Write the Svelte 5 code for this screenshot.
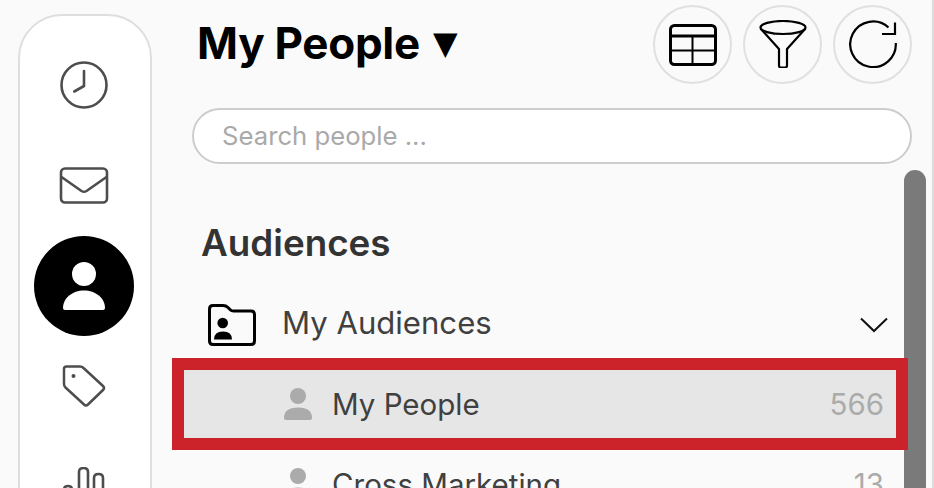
<script>
	const audiences = [
		{ name: 'My People', count: 566, selected: true },
		{ name: 'Cross Marketing', count: 13, selected: false }
	];
</script>

<div class="page">
	<nav class="rail">
		<button class="rail-btn" aria-label="Recent">
			<svg width="50" height="50" viewBox="0 0 50 50" fill="none" stroke="#4d4d4d" stroke-width="2.6" stroke-linecap="round" stroke-linejoin="round">
				<circle cx="25" cy="25" r="22.5" />
				<path d="M25 11v15l-9.700 5.500" />
			</svg>
		</button>
		<button class="rail-btn" aria-label="Messages">
			<svg width="50" height="38" viewBox="0 0 50 38" fill="none" stroke="#4d4d4d" stroke-width="2.6" stroke-linecap="round" stroke-linejoin="round">
				<rect x="2" y="1.500" width="46" height="34" rx="4" />
				<path d="M2.500 10l20 14q2.500 1.500 5 0l20-14" />
			</svg>
		</button>
		<button class="rail-btn active" aria-label="People">
			<svg width="44" height="50" viewBox="0 0 44 50" fill="#fff">
				<circle cx="22" cy="13" r="12" />
				<path d="M1 47c0-10 9.500-17.500 21-17.500S43 37 43 47q0 2-2 2H3q-2 0-2-2z" />
			</svg>
		</button>
		<button class="rail-btn" aria-label="Tags">
			<svg width="44" height="44" viewBox="0 0 44 44" fill="none" stroke="#4d4d4d" stroke-width="2.500" stroke-linejoin="round">
				<path d="M2 4q0-2.500 2.500-2.500H18q2 0 3.500 1.500l19.500 18q2 2 0 4L26 39.500q-2 2-4 0L3.500 22.500Q2 21 2 19z" />
				<circle cx="11.500" cy="11" r="2" fill="#4d4d4d" stroke="none" />
			</svg>
		</button>
		<button class="rail-btn" aria-label="Reports">
			<svg width="44" height="50" viewBox="0 0 44 50" fill="none" stroke="#4d4d4d" stroke-width="2.600">
				<path d="M2 50V23q0-4 4-4t4 4v27" />
				<path d="M17 50V5q0-4 4.500-4T26 5v45" />
				<path d="M32 50V11q0-4 4.500-4T41 11v39" />
			</svg>
		</button>
	</nav>

	<main class="panel">
		<header class="top">
			<h1>My People <span class="caret">▼</span></h1>
			<div class="tools">
				<button class="tool" aria-label="Columns">
					<svg width="48" height="42" viewBox="0 0 48 42" fill="none" stroke="#000">
						<rect x="1.500" y="1.500" width="45" height="39" rx="4" stroke-width="3" />
						<path d="M2 12h44" stroke-width="3" />
						<path d="M2 26.500h44M23.500 12v28" stroke-width="2" />
					</svg>
				</button>
				<button class="tool funnel" aria-label="Filter">
					<svg width="48" height="48" viewBox="0 0 48 48" fill="none" stroke="#000" stroke-width="2.200" stroke-linejoin="round">
						<ellipse cx="24" cy="7.500" rx="22.500" ry="6.500" />
						<path d="M1.500 8.500L20 29v16.500q0 2 2 2h4q2 0 2-2V29L46.500 8.500" />
					</svg>
				</button>
				<button class="tool funnel" aria-label="Refresh">
					<svg width="48" height="48" viewBox="0 0 48 48" fill="none" stroke="#000" stroke-width="2.200">
						<path d="M46.800 23A22.800 22.800 0 1 1 39.500 7.500" />
						<path d="M46 2.500V14H33" />
					</svg>
				</button>
			</div>
		</header>

		<input class="search" type="text" placeholder="Search people ..." />

		<div class="list">
			<h2>Audiences</h2>
			<div class="group">
				<svg class="folder" width="48" height="42" viewBox="0 0 48 42">
					<path d="M5 1.500h10q3 0 5 2l2.500 2.500q1 1 3 1H43q3.500 0 3.500 3.500V37q0 3.500-3.500 3.500H5Q1.500 40.500 1.500 37V5Q1.500 1.500 5 1.500z" fill="none" stroke="#000" stroke-width="3" stroke-linejoin="round" />
					<circle cx="14.700" cy="19" r="5.300" />
					<path d="M6 35.500q0-8 9-8t9 8z" />
				</svg>
				<span class="group-name">My Audiences</span>
				<svg class="chevron" width="28" height="16" viewBox="0 0 28 16" fill="none" stroke="#111" stroke-width="2">
					<path d="M1 1.500l13 12.500L27 1.500" />
				</svg>
			</div>
			{#each audiences as item}
				<div class="row" class:selected={item.selected}>
					<svg class="person" width="28" height="32" viewBox="0 0 28 32" fill="#ababab">
						<circle cx="14" cy="8" r="8" />
						<path d="M0 30q0-10.500 14-10.500T28 30q0 2-2 2H2q-2 0-2-2z" />
					</svg>
					<span class="name">{item.name}</span>
					<span class="count">{item.count}</span>
				</div>
			{/each}
		</div>

		<div class="scrollbar"></div>
	</main>
</div>

<style>
	:global(body) {
		background: #fafafa;
		overflow: hidden;
		font-family: Inter, "Liberation Sans", sans-serif;
	}

	.page {
		display: flex;
		height: 488px;
		overflow: hidden;
		border-right: 2px solid #dcdcdc;
		box-sizing: border-box;
	}

	button {
		border: 0;
		padding: 0;
		background: none;
	}

	.rail {
		flex: none;
		box-sizing: border-box;
		width: 134px;
		height: 600px;
		margin: 14px 0 0 18px;
		padding: 44px 2px 0 0;
		background: #fff;
		border: 2px solid #dedede;
		border-radius: 44px;
		display: flex;
		flex-direction: column;
		align-items: center;
	}

	.rail-btn {
		width: 100px;
		height: 100px;
		display: flex;
		align-items: center;
		justify-content: center;
		border-radius: 50%;
		flex: none;
	}

	.rail-btn:nth-child(1) { height: 50px; }
	.rail-btn:nth-child(2) { height: 38px; margin-top: 57px; }
	.rail-btn:nth-child(3) { margin-top: 31px; }
	.rail-btn:nth-child(4) { height: 44px; margin-top: 29px; }
	.rail-btn:nth-child(5) { height: 50px; margin-top: 58px; }

	.rail-btn.active {
		background: #000;
	}

	.panel {
		position: relative;
		flex: 1;
		min-width: 0;
		padding-left: 40px;
	}

	.top {
		display: flex;
		justify-content: space-between;
		width: 720px;
		height: 108px;
		padding-top: 5px;
		box-sizing: border-box;
	}

	h1 {
		margin: 12px 0 0 5px;
		font-size: 44px;
		line-height: 52px;
		font-weight: 700;
		color: #000;
		letter-spacing: -0.3px;
	}

	.caret {
		font-family: "DejaVu Sans", sans-serif;
		font-size: 32px;
		font-weight: 400;
		line-height: 1;
		vertical-align: 5px;
		margin-left: 3px;
	}

	.tools {
		display: flex;
		gap: 11px;
	}

	.tool {
		width: 79px;
		height: 79px;
		box-sizing: border-box;
		border: 2px solid #e0e0e0;
		border-radius: 50%;
		display: flex;
		align-items: center;
		justify-content: center;
	}

	.tool.funnel {
		padding-bottom: 2px;
	}

	.search {
		display: block;
		box-sizing: border-box;
		width: 720px;
		height: 56px;
		padding: 0 28px 2px;
		border: 2px solid #cdcdcd;
		border-radius: 28px;
		background: #fff;
		font: 400 25.700px Inter, "Liberation Sans", sans-serif;
		outline: none;
	}

	.search::placeholder {
		color: #a9a9a9;
		opacity: 1;
	}

	.list {
		width: 712px;
		margin-top: 56px;
	}

	h2 {
		margin: 0 0 0 9px;
		font-size: 36.800px;
		line-height: 46px;
		font-weight: 600;
		color: #333;
	}

	.group {
		display: flex;
		align-items: center;
		height: 68px;
		margin: 23px 0 13px;
		padding: 0 16px 0 16px;
		color: #404040;
	}

	.folder,
	.chevron {
		position: relative;
		top: 2px;
	}

	.group-name {
		flex: 1;
		margin-left: 26px;
		font-size: 31.100px;
	}

	.row {
		position: relative;
		z-index: 1;
		display: flex;
		align-items: center;
		box-sizing: border-box;
		height: 68px;
		margin: 12px 8px 0 -8px;
		padding: 0 12px 1px 100px;
		color: #404040;
		font-size: 29.500px;
	}

	.row.selected {
		background: #e6e6e6;
		outline: 12px solid #cc2229;
	}

	.name {
		flex: 1;
		margin-left: 20px;
	}

	.count {
		color: #ababab;
	}

	.scrollbar {
		position: absolute;
		top: 170px;
		right: 6px;
		width: 22px;
		height: 330px;
		background: #7a7a7a;
		border-radius: 11px 11px 0 0;
	}
</style>
